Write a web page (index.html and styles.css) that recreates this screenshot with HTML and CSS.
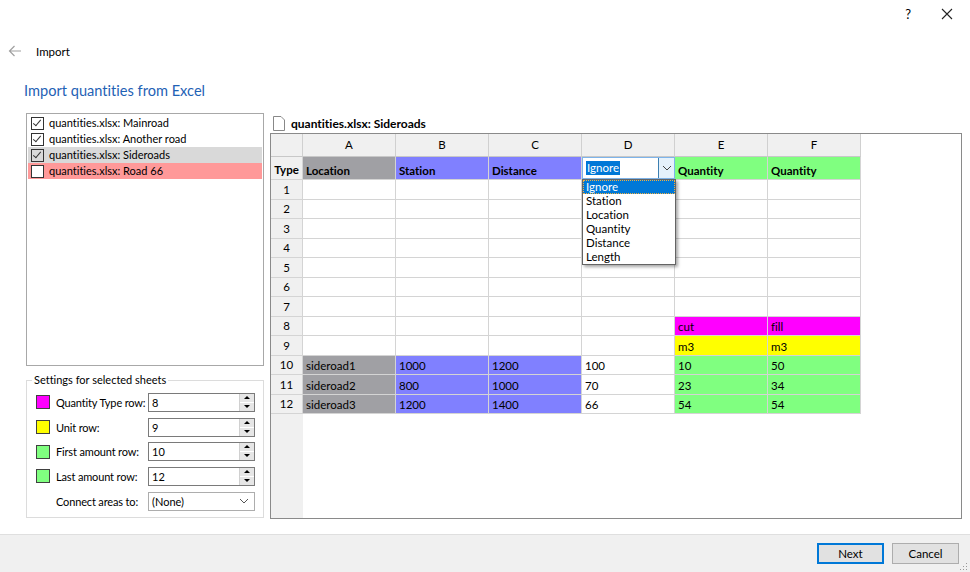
FILE: index.html
```html
<!DOCTYPE html>
<html lang="en">
<head>
    <meta charset="UTF-8">
    <meta name="viewport" content="width=device-width, initial-scale=1.0">
    <title>Import</title>
    <link rel="stylesheet" href="styles.css">
</head>
<body>

    <div class="titlebar">
        <span class="help">?</span>
        <svg class="close" width="12" height="12" viewBox="0 0 12 12">
            <path d="M1 1 L11 11 M11 1 L1 11" stroke="#222" stroke-width="1.1" fill="none"/>
        </svg>
    </div>

    <div class="nav">
        <svg class="back" width="14" height="12" viewBox="0 0 14 12">
            <path d="M13 6 H1.5 M6.5 1 L1.5 6 L6.5 11" stroke="#a0a0a0" stroke-width="1.2" fill="none"/>
        </svg>
        <span>Import</span>
    </div>

    <h1 class="heading">Import quantities from Excel</h1>

    <div class="main">
        <div class="left">
            <div class="sheetlist">
                <div class="sheet"><span class="check on"></span>quantities.xlsx: Mainroad</div>
                <div class="sheet"><span class="check on"></span>quantities.xlsx: Another road</div>
                <div class="sheet current"><span class="check on"></span>quantities.xlsx: Sideroads</div>
                <div class="sheet missing"><span class="check"></span>quantities.xlsx: Road 66</div>
            </div>

            <fieldset class="settings">
                <legend>Settings for selected sheets</legend>
                <div class="setting">
                    <span class="swatch mag"></span>
                    <span class="label">Quantity Type row:</span>
                    <div class="spin"><span>8</span><div class="arrows"><i class="up"></i><i class="down"></i></div></div>
                </div>
                <div class="setting">
                    <span class="swatch yel"></span>
                    <span class="label">Unit row:</span>
                    <div class="spin"><span>9</span><div class="arrows"><i class="up"></i><i class="down"></i></div></div>
                </div>
                <div class="setting">
                    <span class="swatch grn"></span>
                    <span class="label">First amount row:</span>
                    <div class="spin"><span>10</span><div class="arrows"><i class="up"></i><i class="down"></i></div></div>
                </div>
                <div class="setting">
                    <span class="swatch grn"></span>
                    <span class="label">Last amount row:</span>
                    <div class="spin"><span>12</span><div class="arrows"><i class="up"></i><i class="down"></i></div></div>
                </div>
                <div class="setting">
                    <span class="swatch none"></span>
                    <span class="label">Connect areas to:</span>
                    <div class="combo">
                        <span>(None)</span>
                        <svg width="10" height="6" viewBox="0 0 10 6"><path d="M1 1 L5 5 L9 1" stroke="#555" fill="none"/></svg>
                    </div>
                </div>
            </fieldset>
        </div>

        <div class="right">
            <div class="sheettitle">
                <svg class="fileicon" width="12" height="15" viewBox="0 0 12 15">
                    <path d="M0.5 0.5 H8 L11.5 4 V14.5 H0.5 Z" stroke="#888" fill="#fff"/>
                </svg>
                <span>quantities.xlsx: Sideroads</span>
            </div>
            <div class="gridframe">
                <table class="grid">
                    <tr class="colhead">
                        <th></th><th>A</th><th>B</th><th>C</th><th>D</th><th>E</th><th>F</th>
                    </tr>
                    <tr class="typerow">
                        <th>Type</th>
                        <td class="gry">Location</td>
                        <td class="blu">Station</td>
                        <td class="blu">Distance</td>
                        <td class="editing">
                            <div class="cellcombo">
                                <span class="seltext">Ignore</span>
                                <span class="dropbtn">
                                    <svg width="10" height="6" viewBox="0 0 10 6"><path d="M1 1 L5 5 L9 1" stroke="#444" fill="none"/></svg>
                                </span>
                            </div>
                            <div class="droplist">
                                <div class="opt active">Ignore</div>
                                <div class="opt">Station</div>
                                <div class="opt">Location</div>
                                <div class="opt">Quantity</div>
                                <div class="opt">Distance</div>
                                <div class="opt">Length</div>
                            </div>
                        </td>
                        <td class="grn">Quantity</td>
                        <td class="grn">Quantity</td>
                    </tr>
                    <tr class="r20"><th>1</th><td></td><td></td><td></td><td></td><td></td><td></td></tr>
                    <tr class="r19"><th>2</th><td></td><td></td><td></td><td></td><td></td><td></td></tr>
                    <tr class="r20"><th>3</th><td></td><td></td><td></td><td></td><td></td><td></td></tr>
                    <tr class="r19"><th>4</th><td></td><td></td><td></td><td></td><td></td><td></td></tr>
                    <tr class="r20"><th>5</th><td></td><td></td><td></td><td></td><td></td><td></td></tr>
                    <tr class="r19"><th>6</th><td></td><td></td><td></td><td></td><td></td><td></td></tr>
                    <tr class="r20"><th>7</th><td></td><td></td><td></td><td></td><td></td><td></td></tr>
                    <tr class="r19"><th>8</th><td></td><td></td><td></td><td></td><td class="mag">cut</td><td class="mag">fill</td></tr>
                    <tr class="r20"><th>9</th><td></td><td></td><td></td><td></td><td class="yel">m3</td><td class="yel">m3</td></tr>
                    <tr class="r19"><th>10</th><td class="gry">sideroad1</td><td class="blu">1000</td><td class="blu">1200</td><td>100</td><td class="grn">10</td><td class="grn">50</td></tr>
                    <tr class="r20"><th>11</th><td class="gry">sideroad2</td><td class="blu">800</td><td class="blu">1000</td><td>70</td><td class="grn">23</td><td class="grn">34</td></tr>
                    <tr class="r19"><th>12</th><td class="gry">sideroad3</td><td class="blu">1200</td><td class="blu">1400</td><td>66</td><td class="grn">54</td><td class="grn">54</td></tr>
                </table>
            </div>
        </div>
    </div>

    <div class="footer">
        <button class="btn default">Next</button>
        <button class="btn">Cancel</button>
        <svg class="grip" width="8" height="8" viewBox="0 0 8 8">
            <rect x="6" y="0" width="1" height="1" fill="#999"/>
            <rect x="3" y="3" width="1" height="1" fill="#999"/>
            <rect x="6" y="3" width="1" height="1" fill="#999"/>
            <rect x="0" y="6" width="1" height="1" fill="#999"/>
            <rect x="3" y="6" width="1" height="1" fill="#999"/>
            <rect x="6" y="6" width="1" height="1" fill="#999"/>
        </svg>
    </div>

</body>
</html>
```

FILE: styles.css
```css
body {
    margin: 0;
    padding: 0;
    width: 970px;
    height: 572px;
    overflow: hidden;
    background-color: #fff;
    font-family: Lato, "Noto Sans", sans-serif;
    font-size: 11px;
    font-variant-ligatures: none;
    color: #000;
}

.titlebar {
    height: 28px;
    display: flex;
    align-items: center;
    justify-content: flex-end;
    padding-right: 17px;
}

.titlebar .help {
    font-size: 13px;
    margin-right: 30px;
}

.nav {
    height: 20px;
    margin-top: 13px;
    display: flex;
    align-items: center;
    font-size: 11.5px;
}

.nav .back {
    margin-left: 8px;
    margin-right: 14px;
}

.heading {
    margin: 20px 0 0 24px;
    font-size: 14.6px;
    line-height: 20px;
    font-weight: normal;
    color: #1f62b5;
}

.main {
    display: flex;
    margin-top: 12px;
    height: 407px;
}

.left {
    margin-left: 26px;
    width: 238px;
}

.sheetlist {
    height: 253px;
    box-sizing: border-box;
    border: 1px solid #a8a8a8;
    padding: 1px;
}

.sheet {
    height: 16px;
    line-height: 16px;
    display: flex;
    align-items: center;
    padding-left: 3px;
}

.sheet.current {
    background-color: #d9d9d9;
}

.sheet.missing {
    background-color: #ff9999;
}

.check {
    width: 11px;
    height: 11px;
    border: 1px solid #333;
    background-color: #fff;
    margin-right: 5px;
    position: relative;
}

.sheet.current .check {
    background-color: #d9d9d9;
}

.check.on::after {
    content: "";
    position: absolute;
    left: 3px;
    top: 0px;
    width: 3px;
    height: 7px;
    border: solid #333;
    border-width: 0 1px 1px 0;
    transform: rotate(40deg);
}

.settings {
    margin: 7px 0 0 0;
    height: 145px;
    box-sizing: border-box;
    border: 1px solid #dcdcdc;
    padding: 3px 8px 0 9px;
}

.settings legend {
    padding: 0 2px;
    margin-left: -4px;
    line-height: 14px;
}

.setting {
    height: 24.7px;
    display: flex;
    align-items: center;
}

.swatch {
    width: 12px;
    height: 12px;
    border: 1px solid #404040;
    margin-right: 6px;
    flex: none;
}

.swatch.none {
    border-color: transparent;
}

.label {
    width: 92px;
    flex: none;
    white-space: nowrap;
    letter-spacing: -0.15px;
}

.spin, .combo {
    width: 107px;
    height: 19px;
    box-sizing: border-box;
    border: 1px solid #7a7a7a;
    display: flex;
    align-items: center;
    justify-content: space-between;
    padding-left: 3px;
    background-color: #fff;
}

.combo {
    padding-right: 5px;
    border-color: #adadad;
}

.arrows {
    width: 14px;
    height: 17px;
    display: flex;
    flex-direction: column;
    border-left: 1px solid #d0d0d0;
}

.arrows i {
    flex: 1;
    background-color: #e6e6e6;
    position: relative;
}

.arrows i.up {
    border-bottom: 1px solid #fff;
}

.arrows i::after {
    content: "";
    position: absolute;
    left: 4px;
    border-left: 3px solid transparent;
    border-right: 3px solid transparent;
}

.arrows i.up::after {
    top: 2px;
    border-bottom: 3px solid #000;
}

.arrows i.down::after {
    top: 2px;
    border-top: 3px solid #000;
}

.mag { background-color: #ff00ff; }
.yel { background-color: #ffff00; }
.grn { background-color: #80ff80; }
.blu { background-color: #8080ff; }
.gry { background-color: #a0a0a4; }

.right {
    margin-left: 6px;
    width: 692px;
}

.sheettitle {
    height: 20px;
    display: flex;
    align-items: center;
    font-weight: bold;
    font-size: 12px;
}

.fileicon {
    margin-left: 3px;
    margin-right: 6px;
}

.gridframe {
    height: 386px;
    box-sizing: border-box;
    border: 1px solid #8a8a8a;
    background: linear-gradient(to right, #f0f0f0 32px, #fff 32px);
}

.grid {
    border-collapse: separate;
    border-spacing: 0;
    table-layout: fixed;
    width: 590px;
}

.grid th, .grid td {
    box-sizing: border-box;
    border-right: 1px solid #d4d4d4;
    border-bottom: 1px solid #d4d4d4;
    padding: 0;
    font-size: 11.5px;
    line-height: 14px;
    white-space: nowrap;
}

.grid th {
    background-color: #f0f0f0;
    font-weight: normal;
    text-align: center;
    width: 32px;
}

.grid td {
    width: 93px;
    padding-left: 3px;
    vertical-align: bottom;
    padding-bottom: 1px;
    background-color: #fff;
}

.grid td.mag { background-color: #ff00ff; }
.grid td.yel { background-color: #ffff00; }
.grid td.grn { background-color: #80ff80; }
.grid td.blu { background-color: #8080ff; }
.grid td.gry { background-color: #a0a0a4; }

.colhead {
    height: 23px;
}

.colhead th {
    width: 93px;
    border-right-color: #d0d0d0;
    border-bottom-color: #c8c8c8;
}

.colhead th:first-child {
    width: 32px;
}

.typerow {
    height: 23px;
}

.typerow th {
    font-weight: bold;
    vertical-align: bottom;
    padding-bottom: 2px;
}

.typerow td {
    font-weight: bold;
}

.r20 { height: 20px; }
.r19 { height: 19px; }

.grid td.editing {
    position: relative;
    padding: 0;
}

.cellcombo {
    position: absolute;
    left: 0;
    top: 0;
    width: 93px;
    height: 22px;
    box-sizing: border-box;
    border: 1px solid #7eb4ea;
    background-color: #fff;
    display: flex;
    align-items: center;
    justify-content: space-between;
    font-weight: normal;
}

.seltext {
    margin-left: 3px;
    background-color: #0078d7;
    color: #fff;
    padding: 0 1px;
    line-height: 14px;
}

.dropbtn {
    width: 16px;
    height: 20px;
    box-sizing: border-box;
    background-color: #e5f1fb;
    border-left: 1px solid #3c7fb1;
    display: flex;
    align-items: center;
    justify-content: center;
}

.droplist {
    position: absolute;
    left: 0;
    top: 22px;
    width: 94px;
    box-sizing: border-box;
    border: 1px solid #646464;
    background-color: #fff;
    box-shadow: 2px 2px 3px rgba(0, 0, 0, 0.35);
    font-weight: normal;
    z-index: 2;
}

.opt {
    height: 14px;
    line-height: 14px;
    padding-left: 3px;
}

.opt.active {
    background-color: #0078d7;
    color: #fff;
    outline: 1px dotted #f0b040;
    outline-offset: -1px;
}

.footer {
    margin-top: 14px;
    height: 39px;
    box-sizing: border-box;
    border-top: 1px solid #dfdfdf;
    background-color: #f0f0f0;
    display: flex;
    align-items: flex-start;
    justify-content: flex-end;
    padding: 8px 11px 0 0;
    position: relative;
}

.btn {
    width: 67px;
    height: 21px;
    margin-left: 8px;
    border: 1px solid #adadad;
    background-color: #e1e1e1;
    font-family: Lato, "Noto Sans", sans-serif;
    font-size: 11.5px;
    padding: 0;
}

.btn.default {
    border: 2px solid #0078d7;
}

.grip {
    position: absolute;
    right: 2px;
    bottom: 2px;
}
```
